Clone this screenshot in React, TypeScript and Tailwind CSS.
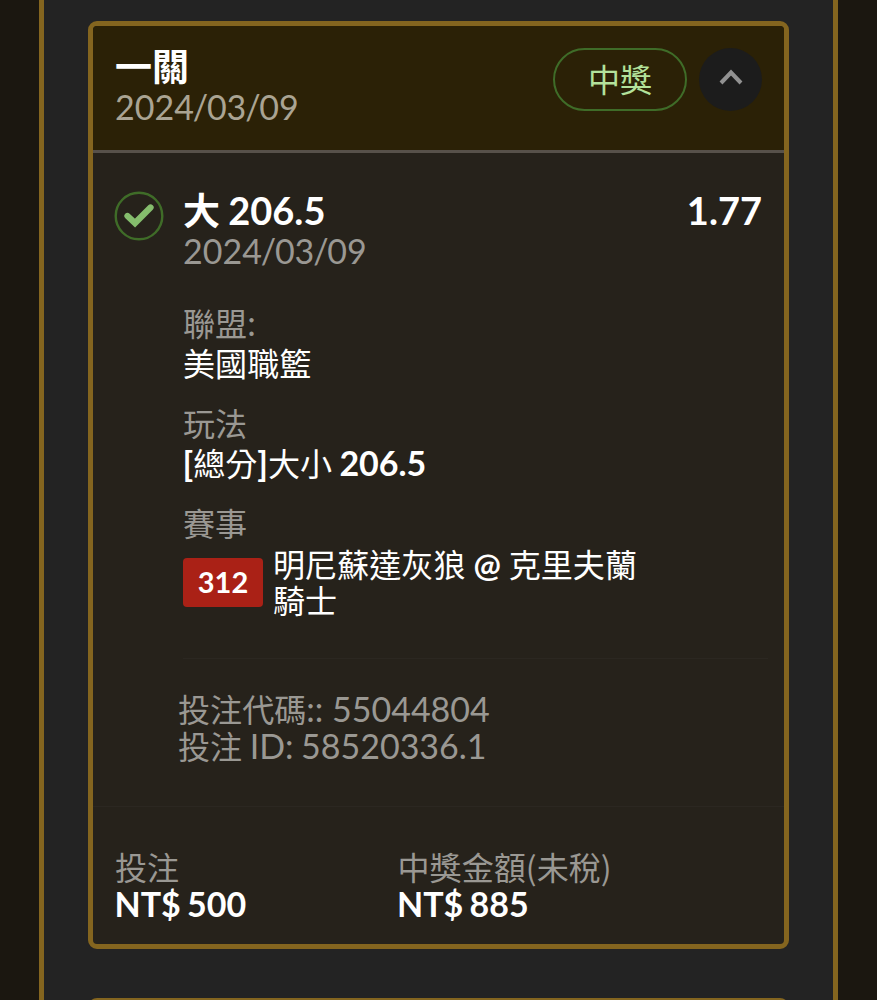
import type { ReactNode } from "react";

const Han = ({ children, big = false }: { children: ReactNode; big?: boolean }) => (
  <span
    lang="zh-TW"
    className={
      big
        ? "font-['Noto_Sans_CJK_TC',sans-serif] text-[37px] leading-none"
        : "font-['Noto_Sans_CJK_TC',sans-serif] text-[32.1px] leading-none"
    }
  >
    {children}
  </span>
);

const Slash = () => <span className="-mx-[1.2px]">/</span>;

const BetDate = () => (
  <>
    2024<Slash />03<Slash />09
  </>
);

const Field = ({ label, children }: { label: ReactNode; children: ReactNode }) => (
  <div className="leading-[40px]">
    <div className="h-10 text-[#9a9893]">{label}</div>
    <div className="h-10 text-white">{children}</div>
  </div>
);

export default function App() {
  return (
    <div className="flex h-[1000px] w-[877px] overflow-hidden bg-[#1b1710] pl-[39px] font-['Lato','Noto_Sans_CJK_TC',sans-serif] text-[34px] whitespace-nowrap">
      <main className="h-[1020px] w-[799px] shrink-0 border-x-[5px] border-[#84651f] bg-[#232323] px-[44px] pt-[21px]">
        <section className="flex h-[928px] w-[701px] flex-col rounded-[9px] border-[5px] border-[#84651f] bg-[#26221b]">
          <header className="flex h-[127px] shrink-0 justify-between rounded-t-[4px] border-b-[3px] border-[#57514a] bg-[#2b2106] pr-[22px] pl-[22px]">
            <div className="pt-[19px]">
              <h1 className="h-[44px] text-[38px] leading-[43px] font-bold text-white">
                <Han big>一關</Han>
              </h1>
              <p className="h-9 leading-9 text-[#aaa493]"><BetDate /></p>
            </div>
            <div className="flex gap-[12px] pt-[22px]">
              <span className="flex h-[63px] w-[134px] items-center justify-center rounded-full border-[2.5px] border-[#3f6c28] pb-[3px] leading-none text-[#b3e29b]">
                <Han>中獎</Han>
              </span>
              <button aria-label="收合" className="flex size-[63px] items-center justify-center rounded-full bg-[#1c1c1c] pb-[5px]">
                <svg width="24" height="18" viewBox="0 0 24 18" fill="none" stroke="#929292" strokeWidth="4">
                  <path d="M2 15 L12 4.5 L22 15" />
                </svg>
              </button>
            </div>
          </header>

          <div className="flex h-[506px] shrink-0 pt-[36px] pl-[21px]">
            <svg className="mt-[2px] shrink-0" width="50" height="50" viewBox="0 0 50 50" fill="none">
              <circle cx="25" cy="25" r="23.3" stroke="#3f6c28" strokeWidth="2.4" />
              <path d="M13.5 25 L21 32 L36.5 16.5" stroke="#85bd6d" strokeWidth="6.3" strokeLinecap="round" />
            </svg>
            <div className="ml-[19px] flex h-[470px] w-[585px] shrink-0 flex-col border-b border-[#2b2721]">
              <div className="flex h-[44px] w-[579px] justify-between text-[38px] leading-[43px] font-bold text-white [word-spacing:-1px]">
                <h2>
                  <Han big>大</Han> 206.5
                </h2>
                <span>1.77</span>
              </div>
              <p className="h-9 leading-9 text-[#9a9893]"><BetDate /></p>
              <div className="mt-[34px] flex flex-col gap-5">
                <Field label={<><Han>聯盟</Han>:</>}>
                  <Han>美國職籃</Han>
                </Field>
                <Field label={<Han>玩法</Han>}>
                  <span className="[word-spacing:-1.5px]">
                    <b className="-ml-[0.5px]">[</b><Han>總分</Han><b>]</b><Han>大小</Han> <b>206.5</b>
                  </span>
                </Field>
                <div>
                  <div className="h-10 leading-[40px] text-[#9a9893]"><Han>賽事</Han></div>
                  <div className="mt-[3px] flex h-[72px] items-center gap-[10px] leading-9 text-white">
                    <span className="flex h-[49px] w-[80px] items-center justify-center rounded-[4px] bg-[#aa2116] text-[29px] font-bold">312</span>
                    <p className="[word-spacing:-0.8px]">
                      <Han>明尼蘇達灰狼</Han> <b className="text-[32.5px] leading-none">@</b> <Han>克里夫蘭</Han>
                      <br />
                      <Han>騎士</Han>
                    </p>
                  </div>
                </div>
              </div>
            </div>
          </div>

          <div className="h-[148px] shrink-0 border-b border-[#2b2721] pt-[32px] pl-[85px] leading-[36.5px] text-[#9a9893]">
            <p><Han>投注代碼</Han>:: 55044804</p>
            <p className="[word-spacing:-1.2px]"><Han>投注</Han> ID: 58520336.1</p>
          </div>

          <footer className="flex pt-[42px] pl-[22px] leading-9 [word-spacing:-2px]">
            <div className="w-[282.5px]">
              <p className="h-[37px] text-[#9a9893]"><Han>投注</Han></p>
              <p className="-ml-[0.5px] font-bold text-white">NT$ 500</p>
            </div>
            <div>
              <p className="h-[37px] text-[#9a9893]"><Han>中獎金額(未稅)</Han></p>
              <p className="-ml-[0.5px] font-bold text-white">NT$ 885</p>
            </div>
          </footer>
        </section>
        <section className="mt-[49px] h-[100px] w-[701px] rounded-[9px] border-[5px] border-[#84651f] bg-[#2b2106]" />
      </main>
    </div>
  );
}
